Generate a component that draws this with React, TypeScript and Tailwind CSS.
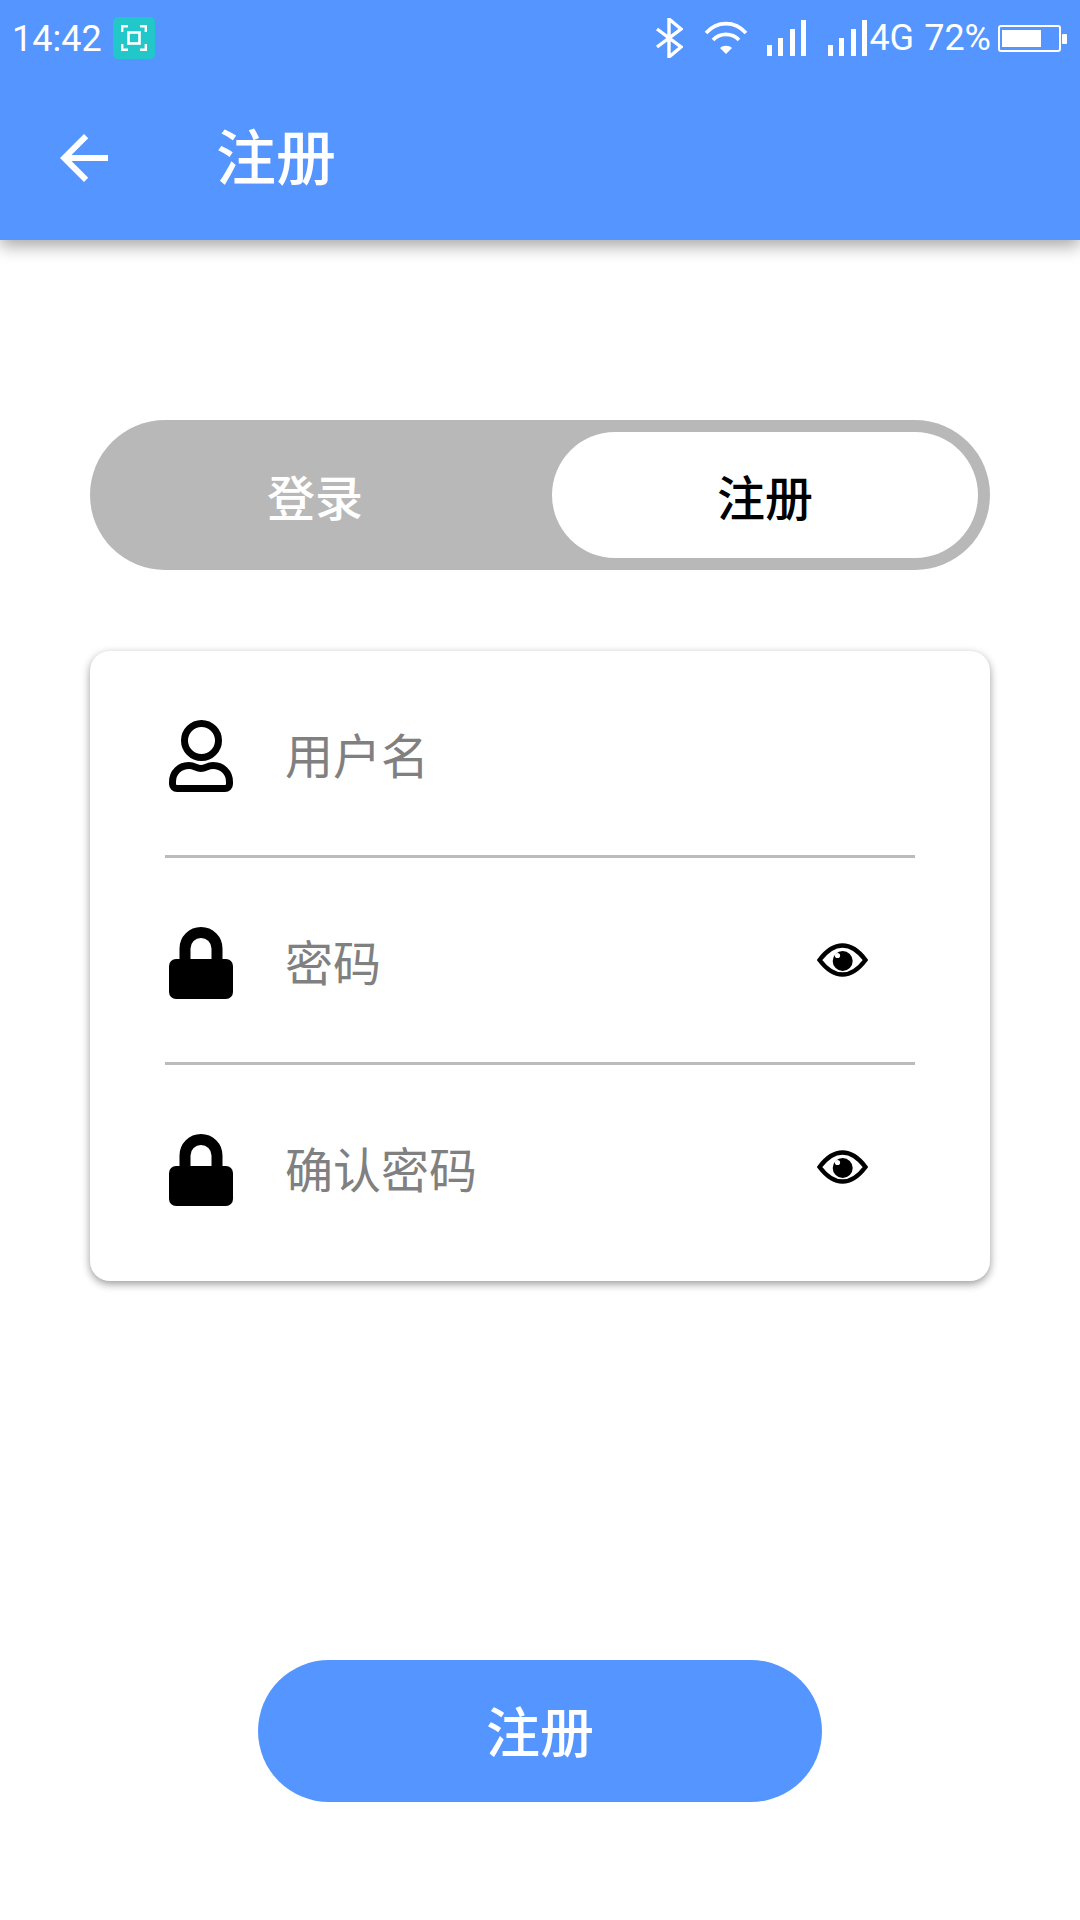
const CJK = 'font-["Noto_Sans_CJK_SC","Noto_Sans",sans-serif]';

function StatusBar() {
  return (
    <div className='flex h-[76px] items-center pl-[12px] font-["Roboto",sans-serif] text-[36px] font-normal text-white'>
      <span className="mt-[2px] leading-none">14:42</span>
      <div className="ml-[11px] flex h-[42px] w-[42px] items-center justify-center rounded-[5px] bg-[#22c7c9]">
        <svg width="26" height="26" viewBox="0 0 26 26" fill="none" stroke="white" strokeWidth="2.4">
          <path d="M1.2 7V1.2H7M19 1.2h5.8V7M24.8 19v5.8H19M7 24.8H1.2V19" />
          <rect x="7.5" y="7.5" width="11" height="11" strokeWidth="2.6" />
        </svg>
      </div>
      <div className="ml-auto flex items-center pr-[13px]">
        <svg width="28" height="40" viewBox="0 0 28 40" fill="none" stroke="white" strokeWidth="3.4">
          <path d="M2 11l24 18-12 10V1l12 10L2 29" />
        </svg>
        <svg className="ml-[21px]" width="44" height="34" viewBox="0 0 44 34" fill="none" stroke="white" strokeWidth="3.6">
          <path d="M2 12C13 -0.5 31 -0.5 42 12" />
          <path d="M9 19C16 11.5 28 11.5 35 19" />
          <path d="M22 33l-6-6c3-3 9-3 12 0z" fill="white" stroke="none" />
        </svg>
        <SignalBars className="ml-[19px]" />
        <SignalBars className="ml-[22px]" />
        <span className="ml-[2px] leading-none">4G</span>
        <span className="ml-[10px] leading-none">72%</span>
        <svg className="ml-[7px]" width="69" height="27" viewBox="0 0 69 27" fill="none">
          <rect x="1" y="1" width="61" height="25" rx="2" stroke="white" strokeWidth="2" />
          <rect x="4" y="5" width="39" height="17" fill="white" />
          <rect x="64" y="9" width="5" height="10" rx="1" fill="white" />
        </svg>
      </div>
    </div>
  );
}

function SignalBars({ className }: { className: string }) {
  return (
    <svg className={className} width="39" height="36" viewBox="0 0 39 36" fill="white">
      <rect x="0" y="25" width="5" height="11" />
      <rect x="11" y="18" width="5" height="18" />
      <rect x="23" y="9" width="5" height="27" />
      <rect x="34" y="0" width="5" height="36" />
    </svg>
  );
}

function PersonIcon() {
  return (
    <svg width="64" height="72" viewBox="0 0 64 72" fill="none" stroke="black" strokeWidth="7">
      <circle cx="32.5" cy="20.5" r="17" />
      <path d="M8 68.5H56A4.5 4.5 0 0 0 60.5 64V62C60.5 52 53 45.5 44 45.5C38 45.5 37 48.5 32 48.5C27 48.5 26 45.5 20 45.5C11 45.5 3.5 52 3.5 62V64A4.5 4.5 0 0 0 8 68.5Z" />
    </svg>
  );
}

function LockIcon() {
  return (
    <svg width="64" height="72" viewBox="0 0 64 72" fill="black">
      <path d="M16 36V21.5A16 16 0 0 1 48 21.5V36" fill="none" stroke="black" strokeWidth="11" />
      <rect x="0" y="32" width="64" height="40" rx="7" />
    </svg>
  );
}

function EyeIcon() {
  return (
    <svg className="mr-[47px] ml-auto -mt-[6px]" width="51" height="34" viewBox="0 0 51 34" fill="none">
      <path
        d="M2.5 17C10 7 18 2.5 25.5 2.5C33 2.5 41 7 48.5 17C41 27 33 31.5 25.5 31.5C18 31.5 10 27 2.5 17Z"
        stroke="black"
        strokeWidth="4.4"
      />
      <circle cx="25.7" cy="18" r="10" fill="black" />
      <circle cx="20.5" cy="12.5" r="2.6" fill="white" />
    </svg>
  );
}

function Field({ icon, label, eye, last }: { icon: React.ReactNode; label: string; eye?: boolean; last?: boolean }) {
  return (
    <div className={last ? 'h-[216px] pt-[69px]' : 'h-[207px] border-b-[3px] border-[#bcbcbc] pt-[69px]'}>
      <div className="flex h-[72px] items-center pl-[4px]">
        {icon}
        <span className="ml-[52px] -mt-[7px] text-[48px] leading-none text-[#808080]">{label}</span>
        {eye && <EyeIcon />}
      </div>
    </div>
  );
}

export default function App() {
  return (
    <div className={`flex h-[1920px] w-[1080px] flex-col bg-white ${CJK}`}>
      <header className="relative z-10 h-[240px] bg-[#5595ff] shadow-[0_6px_16px_rgba(0,0,0,0.35)]">
        <StatusBar />
        <div className="flex h-[164px] items-center pl-[48px] text-white">
          <svg width="72" height="72" viewBox="0 0 24 24" fill="white">
            <path d="M20 11H7.83l5.59-5.59L12 4l-8 8 8 8 1.41-1.41L7.83 13H20v-2z" />
          </svg>
          <span className="ml-[96px] -mt-[9px] text-[60px] font-medium leading-none">注册</span>
        </div>
      </header>

      <main className="flex flex-1 flex-col px-[90px] pt-[180px]">
        <div className="flex h-[150px] items-center rounded-full bg-[#b8b8b8] p-[12px] text-[48px] font-medium">
          <div className="flex-1 pr-[24px] text-center text-white">登录</div>
          <div className="flex h-[126px] w-[426px] items-center justify-center rounded-full bg-white text-black">注册</div>
        </div>

        <div className="mt-[81px] rounded-[20px] bg-white px-[75px] shadow-[0_3px_8px_rgba(0,0,0,0.4)]">
          <Field icon={<PersonIcon />} label="用户名" />
          <Field icon={<LockIcon />} label="密码" eye />
          <Field icon={<LockIcon />} label="确认密码" eye last />
        </div>

        <button className="mx-auto mt-[379px] flex h-[142px] w-[564px] items-center justify-center rounded-full bg-[#5595ff] pb-[3px] text-[54px] font-medium text-white">
          注册
        </button>
      </main>
    </div>
  );
}
